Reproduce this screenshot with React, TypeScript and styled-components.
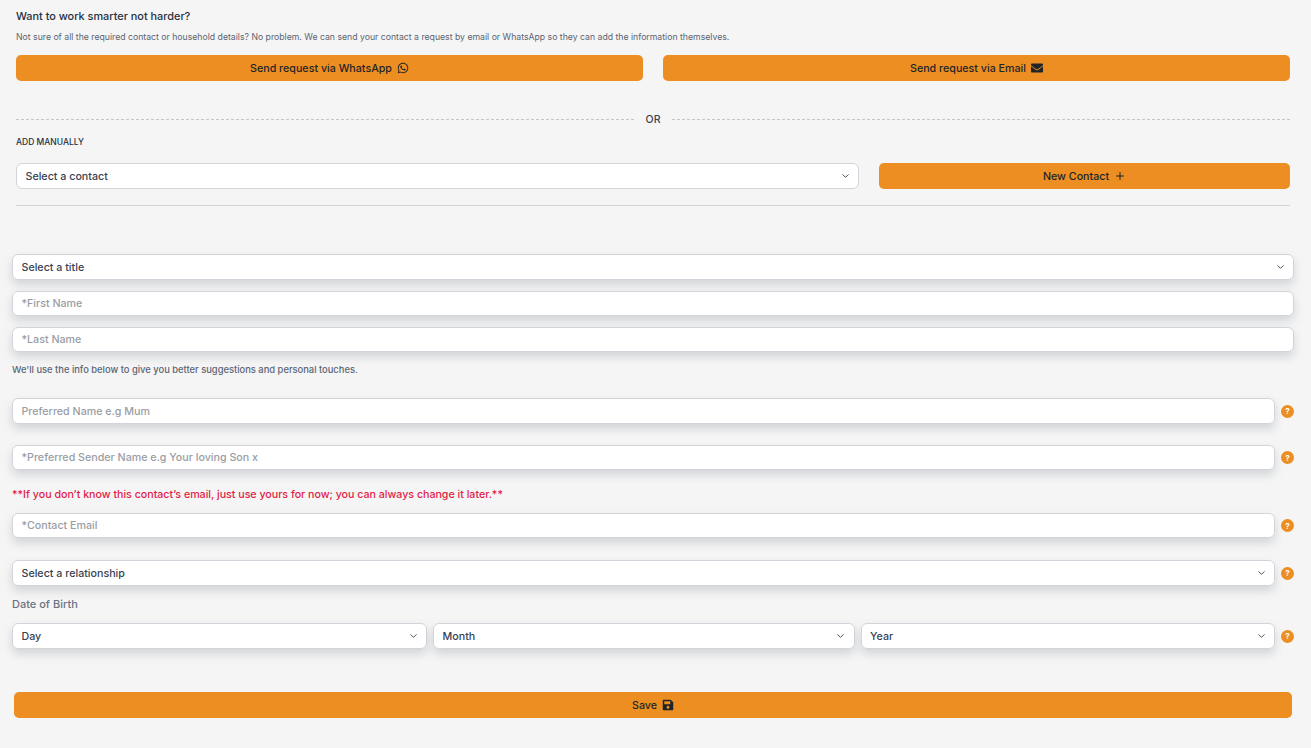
import styled, { createGlobalStyle } from "styled-components";
import { FaWhatsapp, FaEnvelope, FaSave } from "react-icons/fa";
import { ChevronDown, Plus } from "lucide-react";
import { ReactNode } from "react";

const GlobalStyle = createGlobalStyle`
  html, body {
    margin: 0;
    background: #f5f5f5;
    font-family: "Inter", "Liberation Sans", sans-serif;
    color: #1f2937;
  }
  * { box-sizing: border-box; }
`;

const Page = styled.div`
  width: 1311px;
  height: 748px;
  overflow: hidden;
`;

const RequestSection = styled.section`
  padding: 10px 21px 0 16px;
`;

const Heading = styled.h2`
  margin: 0;
  font-size: 10.9px;
  line-height: 13px;
  font-weight: 500;
  color: #27303f;
`;

const Intro = styled.p`
  margin: 9px 0 0;
  font-size: 8.7px;
  line-height: 11px;
  font-weight: 400;
  color: #5b6472;
`;

const ButtonRow = styled.div`
  display: grid;
  grid-template-columns: 1fr 1fr;
  gap: 20px;
  margin-top: 12px;
`;

const ActionButton = styled.button`
  display: flex;
  align-items: center;
  justify-content: center;
  gap: 5px;
  width: 100%;
  height: 26px;
  padding: 0;
  border: none;
  border-radius: 5px;
  background: #ec8e22;
  color: #1f2428;
  font-family: inherit;
  font-size: 10.7px;
  font-weight: 500;
  svg { width: 12px; height: 12px; }
`;

const Divider = styled.div`
  display: flex;
  align-items: center;
  gap: 12px;
  margin-top: 30px;
  height: 16px;
  font-size: 10.5px;
  font-weight: 500;
  color: #3b4350;
  &::before, &::after {
    content: "";
    flex: 1;
    border-top: 1px dashed #c4c6ca;
  }
`;

const ManualLabel = styled.div`
  margin-top: 9px;
  font-size: 8.5px;
  line-height: 12px;
  font-weight: 500;
  color: #27303f;
`;

const ContactRow = styled.div`
  display: grid;
  grid-template-columns: 843px 1fr;
  gap: 20px;
  margin-top: 15px;
`;

const Rule = styled.hr`
  margin: 16px 0 0;
  border: none;
  border-top: 1px solid #d1d3d6;
`;

const DetailsForm = styled.form`
  padding: 48px 17px 0 12px;
`;

const Stack = styled.div`
  display: flex;
  flex-direction: column;
  gap: 11px;
`;

const FieldShell = styled.div<{ $shadow?: boolean; $height?: number }>`
  position: relative;
  width: 100%;
  min-width: 0;
  height: ${(p) => p.$height ?? 26}px;
  border-radius: 6px;
  box-shadow: ${(p) => (p.$shadow ? "0 5px 10px rgba(90, 100, 115, 0.22)" : "none")};
`;

const fieldBase = `
  display: block;
  width: 100%;
  height: 100%;
  padding: 0 8.5px;
  border: 1px solid #d1d5db;
  border-radius: 6px;
  background: #fff;
  font-family: inherit;
  font-size: 10.7px;
  outline: none;
`;

const NativeSelect = styled.select`
  ${fieldBase}
  appearance: none;
  font-weight: 500;
  color: #374151;
`;

const TextInput = styled.input`
  ${fieldBase}
  font-weight: 500;
  color: #374151;
  &::placeholder { color: #9a9da3; opacity: 1; }
`;

const Chevron = styled(ChevronDown)`
  position: absolute;
  top: 50%;
  right: 8.5px;
  width: 11px;
  height: 11px;
  transform: translateY(-50%);
  color: #374151;
  pointer-events: none;
`;

const HelpRow = styled.div<{ $top: number }>`
  display: flex;
  align-items: center;
  gap: 6px;
  margin-top: ${(p) => p.$top}px;
`;

const HelpBadge = styled.span`
  display: flex;
  flex: none;
  align-items: center;
  justify-content: center;
  width: 13px;
  height: 13px;
  border-radius: 50%;
  background: #ec8e22;
  color: #fff;
  font-size: 8px;
  font-weight: 700;
`;

const Note = styled.p`
  margin: 12px 0 0;
  font-size: 9.37px;
  line-height: 12px;
  font-weight: 500;
  color: #5b6472;
`;

const Warning = styled.p`
  margin: 18px 0 0;
  font-size: 10.65px;
  line-height: 13px;
  font-weight: 500;
  color: #e11d48;
`;

const DateLabel = styled.div`
  margin-top: 11px;
  font-size: 11px;
  line-height: 14px;
  font-weight: 500;
  color: #6b7280;
`;

const DateFields = styled.div`
  display: grid;
  width: 100%;
  min-width: 0;
  grid-template-columns: 415px 421.5px 1fr;
  gap: 6px;
`;

const SaveWrap = styled.div`
  margin: 43px 2px 0;
`;

function SelectField({ label, height }: { label: string; height?: number }) {
  return (
    <FieldShell $shadow $height={height}>
      <NativeSelect defaultValue="">
        <option value="">{label}</option>
      </NativeSelect>
      <Chevron strokeWidth={2} />
    </FieldShell>
  );
}

function InputField({ placeholder, height }: { placeholder: string; height?: number }) {
  return (
    <FieldShell $shadow $height={height}>
      <TextInput placeholder={placeholder} />
    </FieldShell>
  );
}

function WithHelp({ top, children }: { top: number; children: ReactNode }) {
  return (
    <HelpRow $top={top}>
      {children}
      <HelpBadge>?</HelpBadge>
    </HelpRow>
  );
}

export default function App() {
  return (
    <Page>
      <GlobalStyle />
      <RequestSection>
        <Heading>Want to work smarter not harder?</Heading>
        <Intro>
          Not sure of all the required contact or household details? No problem. We can send your contact a
          request by email or WhatsApp so they can add the information themselves.
        </Intro>
        <ButtonRow>
          <ActionButton type="button">
            Send request via WhatsApp <FaWhatsapp />
          </ActionButton>
          <ActionButton type="button">
            Send request via Email <FaEnvelope />
          </ActionButton>
        </ButtonRow>
        <Divider>OR</Divider>
        <ManualLabel>ADD MANUALLY</ManualLabel>
        <ContactRow>
          <FieldShell>
            <NativeSelect defaultValue="">
              <option value="">Select a contact</option>
            </NativeSelect>
            <Chevron strokeWidth={2} />
          </FieldShell>
          <ActionButton type="button">
            New Contact <Plus strokeWidth={2} />
          </ActionButton>
        </ContactRow>
        <Rule />
      </RequestSection>

      <DetailsForm>
        <Stack>
          <SelectField label="Select a title" />
          <InputField placeholder="*First Name" height={25} />
          <InputField placeholder="*Last Name" height={25} />
        </Stack>
        <Note>We'll use the info below to give you better suggestions and personal touches.</Note>
        <WithHelp top={22}>
          <InputField placeholder="Preferred Name e.g Mum" />
        </WithHelp>
        <WithHelp top={21}>
          <InputField placeholder="*Preferred Sender Name e.g Your loving Son x" height={25} />
        </WithHelp>
        <Warning>**If you don’t know this contact’s email, just use yours for now; you can always change it later.**</Warning>
        <WithHelp top={12}>
          <InputField placeholder="*Contact Email" height={25} />
        </WithHelp>
        <WithHelp top={22}>
          <SelectField label="Select a relationship" />
        </WithHelp>
        <DateLabel>Date of Birth</DateLabel>
        <WithHelp top={12}>
          <DateFields>
            <SelectField label="Day" />
            <SelectField label="Month" />
            <SelectField label="Year" />
          </DateFields>
        </WithHelp>
        <SaveWrap>
          <ActionButton type="button">
            Save <FaSave />
          </ActionButton>
        </SaveWrap>
      </DetailsForm>
    </Page>
  );
}
